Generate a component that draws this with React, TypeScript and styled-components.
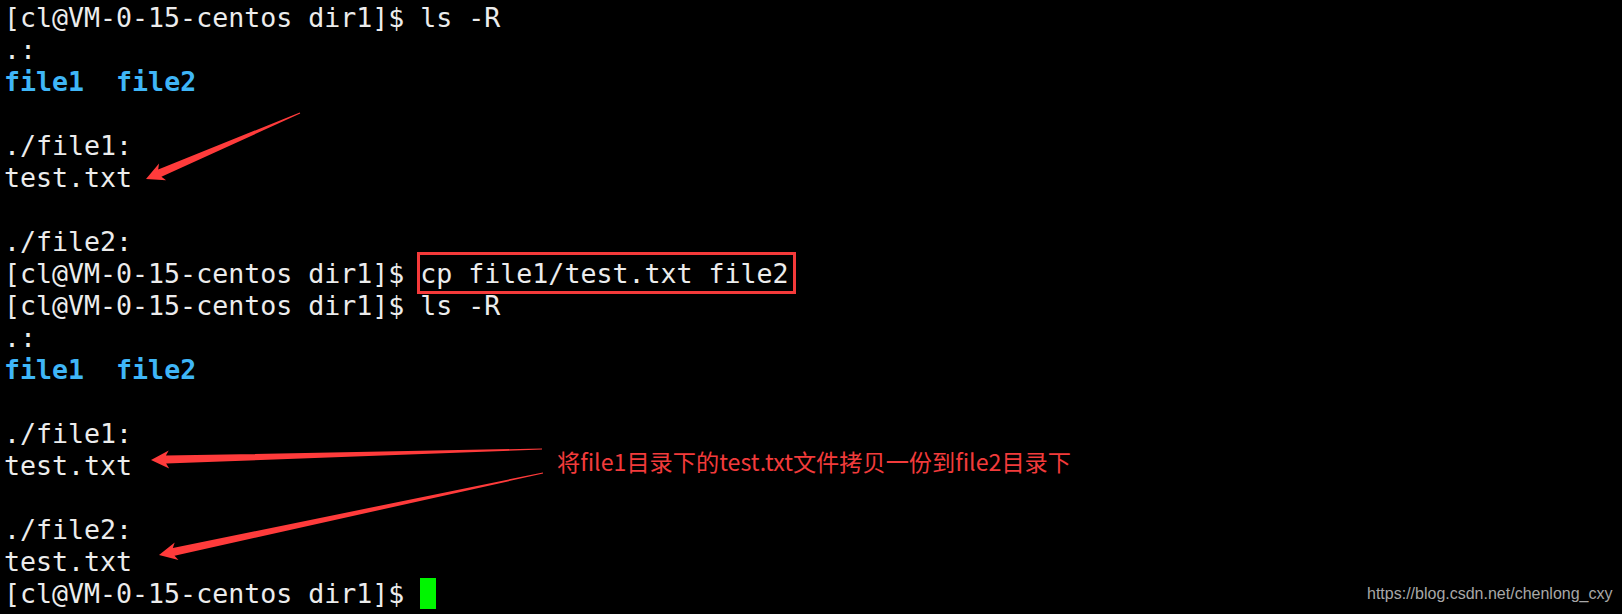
import React from "react";
import styled, { createGlobalStyle } from "styled-components";

const Global = createGlobalStyle`
  html, body { margin: 0; padding: 0; background: #000; }
  body { overflow: hidden; }
`;

const Screen = styled.div`
  position: relative;
  width: 1622px;
  height: 614px;
  background: #000;
  overflow: hidden;
`;

const Terminal = styled.div`
  padding: 2px 0 0 4px;
  font-family: "DejaVu Sans Mono", "Liberation Mono", monospace;
  font-size: 26.6px;
  line-height: 32px;
  color: #ececec;
  white-space: pre;
`;

const Line = styled.div`
  height: 32px;
`;

const Dir = styled.span`
  color: #3fb6f7;
  font-weight: bold;
`;

const Boxed = styled.span`
  border: 3px solid #f53a3a;
  padding: 3px 4px 2px 0;
  margin-left: -3px;
`;

const Cursor = styled.span`
  display: inline-block;
  width: 16px;
  height: 31px;
  vertical-align: top;
  background: #00f500;
`;

const Overlay = styled.svg`
  position: absolute;
  left: 0;
  top: 0;
  pointer-events: none;
`;

const Caption = styled.div`
  position: absolute;
  left: 557px;
  top: 450px;
  font-family: "Noto Sans CJK SC", "Noto Sans", sans-serif;
  font-size: 23.2px;
  line-height: 1;
  color: #f23b3b;
  white-space: nowrap;
`;

const Watermark = styled.div`
  position: absolute;
  left: 1367px;
  top: 586px;
  font-family: "Liberation Sans", Arial, sans-serif;
  font-size: 16px;
  line-height: 1;
  color: #a8a8a8;
  white-space: nowrap;
`;

type Seg = { text?: string; kind?: "dir" | "boxed" | "cursor" };

const PROMPT = "[cl@VM-0-15-centos dir1]$ ";
const dirs: Seg[] = [{ text: "file1", kind: "dir" }, { text: "  " }, { text: "file2", kind: "dir" }];

const lines: Seg[][] = [
  [{ text: PROMPT + "ls -R" }],
  [{ text: ".:" }],
  dirs,
  [],
  [{ text: "./file1:" }],
  [{ text: "test.txt" }],
  [],
  [{ text: "./file2:" }],
  [{ text: PROMPT }, { text: "cp file1/test.txt file2", kind: "boxed" }],
  [{ text: PROMPT + "ls -R" }],
  [{ text: ".:" }],
  dirs,
  [],
  [{ text: "./file1:" }],
  [{ text: "test.txt" }],
  [],
  [{ text: "./file2:" }],
  [{ text: "test.txt" }],
  [{ text: PROMPT }, { kind: "cursor" }],
];

function renderSeg(s: Seg, i: number) {
  if (s.kind === "dir") return <Dir key={i}>{s.text}</Dir>;
  if (s.kind === "boxed") return <Boxed key={i}>{s.text}</Boxed>;
  if (s.kind === "cursor") return <Cursor key={i} />;
  return <span key={i}>{s.text}</span>;
}

function arrowPoints(tx: number, ty: number, px: number, py: number) {
  const dx = tx - px;
  const dy = ty - py;
  const len = Math.hypot(dx, dy);
  const ux = dx / len;
  const uy = dy / len;
  const nx = -uy;
  const ny = ux;
  const headLen = 18;
  const headHalf = 9;
  const shaftHalf = 4;
  const tailHalf = 0.5;
  const bx = px + ux * headLen;
  const by = py + uy * headLen;
  const bx2 = px + ux * (headLen - 3);
  const by2 = py + uy * (headLen - 3);
  const pts: [number, number][] = [
    [tx + nx * tailHalf, ty + ny * tailHalf],
    [bx2 + nx * shaftHalf, by2 + ny * shaftHalf],
    [bx + nx * headHalf, by + ny * headHalf],
    [px, py],
    [bx - nx * headHalf, by - ny * headHalf],
    [bx2 - nx * shaftHalf, by2 - ny * shaftHalf],
    [tx - nx * tailHalf, ty - ny * tailHalf],
  ];
  return pts.map((p) => p[0].toFixed(1) + "," + p[1].toFixed(1)).join(" ");
}

const arrows = [
  { t: [300, 113], p: [146, 179] },
  { t: [542, 449], p: [151, 460] },
  { t: [543, 473], p: [159, 555] },
];

export default function App() {
  return (
    <>
      <Global />
      <Screen>
        <Terminal>
          {lines.map((segs, i) => (
            <Line key={i}>{segs.length ? segs.map(renderSeg) : " "}</Line>
          ))}
        </Terminal>
        <Overlay width={1622} height={614} viewBox="0 0 1622 614">
          {arrows.map((a, i) => (
            <polygon key={i} points={arrowPoints(a.t[0], a.t[1], a.p[0], a.p[1])} fill="#ff3b3b" />
          ))}
        </Overlay>
        <Caption>将file1目录下的test.txt文件拷贝一份到file2目录下</Caption>
        <Watermark>https://blog.csdn.net/chenlong_cxy</Watermark>
      </Screen>
    </>
  );
}
